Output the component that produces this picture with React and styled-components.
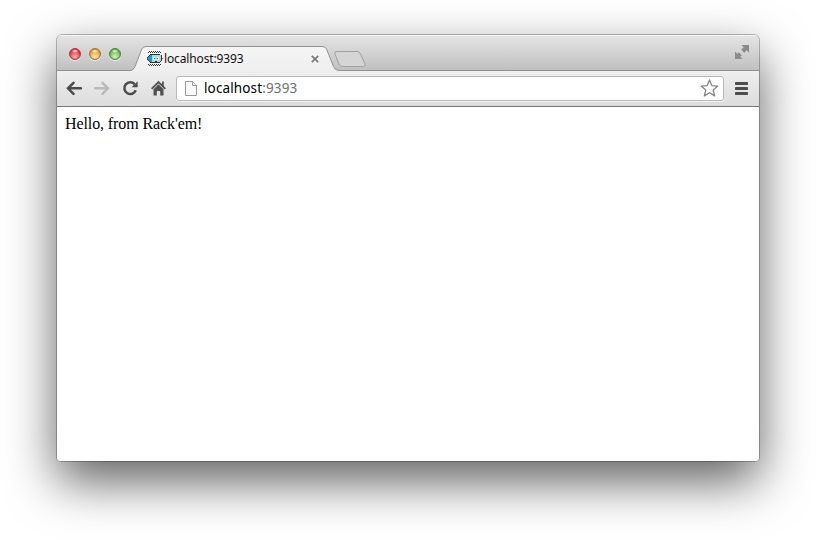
import React from "react";
import styled, { createGlobalStyle } from "styled-components";

const GlobalStyle = createGlobalStyle`
  html, body { margin: 0; background: #fff; }
  body { overflow: hidden; }
  svg { display: block; flex: none; }
`;

const Desktop = styled.main`
  box-sizing: border-box;
  width: 816px;
  height: 540px;
  padding: 35px 57px 0;
  background: #fff;
`;

const BrowserWindow = styled.section`
  display: flex;
  flex-direction: column;
  width: 702px;
  height: 426px;
  border-radius: 5px 5px 4px 4px;
  background: #fff;
  overflow: hidden;
  box-shadow: 0 0 0 1px rgba(0, 0, 0, 0.25), 0 20px 50px rgba(0, 0, 0, 0.63);
`;

const TabStrip = styled.header`
  box-sizing: border-box;
  display: flex;
  height: 36px;
  flex: none;
  background: linear-gradient(#e5e5e5, #bfbfbf);
  box-shadow: inset 0 1px #f3f3f3, inset 0 -1px #929292;
`;

const TrafficLights = styled.div`
  display: flex;
  gap: 8px;
  padding: 13px 0 0 12px;
  width: 62px;
`;

const Light = styled.i`
  box-sizing: border-box;
  width: 12px;
  height: 12px;
  border: 1px solid ${(p) => p.$edge};
  border-radius: 50%;
  background: radial-gradient(ellipse 4px 2px at 50% 20%, rgba(255, 255, 255, 0.9), transparent),
    radial-gradient(circle at 50% 75%, ${(p) => p.$glow}, ${(p) => p.$base} 65%);
  box-shadow: 0 1px 1px rgba(255, 255, 255, 0.7), inset 0 1px 1px rgba(0, 0, 0, 0.2);
`;

const Tab = styled.div`
  display: grid;
  width: 208px;
  height: 36px;
  > * { grid-area: 1 / 1; }
`;

const TabContent = styled.div`
  display: flex;
  align-items: flex-start;
  padding: 16px 0 0 16px;
  z-index: 1;
`;

const TabTitle = styled.span`
  width: 147px;
  margin-left: 1px;
  font: 12px/16px "Noto Sans", "Open Sans", sans-serif;
  letter-spacing: -0.14px;
  color: #111;
  white-space: nowrap;
`;

const CloseIcon = styled.svg`
  margin-top: 4px;
`;

const NewTab = styled.svg`
  margin: 15px 0 0 -6px;
`;

const ExpandIcon = styled.svg`
  margin: 10px 10px 0 auto;
`;

const Toolbar = styled.nav`
  box-sizing: border-box;
  display: flex;
  align-items: center;
  height: 36px;
  flex: none;
  padding: 0 10px 1px 9px;
  border-bottom: 1px solid #777;
  background: linear-gradient(#efefef, #dcdcdc);
`;

const NavButtons = styled.div`
  display: flex;
  gap: 12px;
  width: 110px;
`;

const AddressBar = styled.div`
  box-sizing: border-box;
  display: flex;
  align-items: center;
  width: 548px;
  height: 25px;
  padding: 0 4px 0 7px;
  border: 1px solid #b9b9b9;
  border-radius: 3px;
  background: #fff;
  box-shadow: 0 1px rgba(255, 255, 255, 0.6);
`;

const Address = styled.span`
  flex: 1;
  margin-left: 7px;
  font: 13.5px/20px "Noto Sans", "Open Sans", sans-serif;
  letter-spacing: 0.13px;
  color: #000;
`;

const Port = styled.span`
  color: #707070;
`;

const MenuIcon = styled.svg`
  margin-left: 11px;
`;

const Page = styled.article`
  flex: 1;
  padding: 8px;
  background: #fff;
  font: 16px/18px "Liberation Serif", serif;
  letter-spacing: -0.1px;
  color: #000;
`;

const robotRows = [
  "..k.k.k.k.k.k...",
  ".k.k.k.k.k.k.k..",
  "................",
  "...kkkkkkkkkk...",
  "..kbbccccccccck.",
  ".kbbbccccccccck.",
  "kbbbbcwwccwwcck.",
  "rbbbbcwrccrwcckr",
  "kbbbbcwwccwwcck.",
  ".kbbbccccccccck.",
  "..kbbccckkccck..",
  "...kkkkkkkkkk...",
  "................",
  ".k.k.k.k.k.k.k..",
  "..k.k.k.k.k.k...",
];
const robotColors = { k: "#333", b: "#159dcc", c: "#a4dbea", w: "#eef8fa", r: "#e0302a" };

const Favicon = () => (
  <svg width="16" height="15" viewBox="0 0 16 15" shapeRendering="crispEdges">
    {robotRows.flatMap((row, y) =>
      [...row].map((c, x) =>
        c === "." ? null : <rect key={`${x}-${y}`} x={x} y={y} width="1" height="1" fill={robotColors[c]} />
      )
    )}
  </svg>
);

const Arrow = ({ color, flip }) => (
  <svg width="16" height="16" viewBox="0 0 16 16">
    <path
      transform={flip ? "translate(16 0) scale(-1 1)" : undefined}
      d="M7.500 2.800 2 8.300l5.500 5.500M2.300 8.300H15"
      fill="none" stroke={color} strokeWidth="2.500" strokeLinecap="round"
    />
  </svg>
);

export default function App() {
  return (
    <Desktop>
      <GlobalStyle />
      <BrowserWindow>
        <TabStrip>
          <TrafficLights>
            <Light $edge="#a53b3f" $base="#df3842" $glow="#ffb0aa" />
            <Light $edge="#a0713c" $base="#e8a03c" $glow="#ffe9a0" />
            <Light $edge="#4f7f42" $base="#6cb956" $glow="#cff6b4" />
          </TrafficLights>
          <Tab>
            <svg width="208" height="36" viewBox="0 0 208 36">
              <defs>
                <linearGradient id="tabFill" x1="0" y1="0" x2="0" y2="1">
                  <stop stopColor="#f5f5f5" />
                  <stop offset="1" stopColor="#efefef" />
                </linearGradient>
              </defs>
              <path d="M0 36V35.500Q2.500 35 4 31.500L10.800 14Q12 11.500 15 11.500H191Q194.500 11.500 195.500 14L202.500 31.500Q204 35.500 208 35.500V36Z" fill="url(#tabFill)" />
              <path d="M0 35.500Q2.500 35 4 31.500L10.800 14Q12 11.500 15 11.500H191Q194.500 11.500 195.500 14L202.500 31.500Q204 35.500 208 35.500" fill="none" stroke="#929292" />
            </svg>
            <TabContent>
              <Favicon />
              <TabTitle>localhost:9393</TabTitle>
              <CloseIcon width="8" height="8" viewBox="0 0 8 8">
                <path d="m.8.8 6.400 6.400M7.200.8.8 7.200" stroke="#777" strokeWidth="1.700" />
              </CloseIcon>
            </TabContent>
          </Tab>
          <NewTab width="34" height="18" viewBox="0 0 34 18">
            <path d="M4 1.500H24Q26.500 1.500 27.500 4L32 14Q33 16.500 30.500 16.500H10Q7 16.500 6 14L2 4Q1 1.500 4 1.500Z" fill="#d5d5d5" stroke="#a0a0a0" />
          </NewTab>
          <ExpandIcon width="14" height="14" viewBox="0 0 14 14" fill="#8b8b8b">
            <path d="M6.500 0H14v7.500l-2.200-2.200-2.600 2.500-3-3 2.500-2.600ZM0 6.500V14h7.500l-2.200-2.200 1.500-1.500-3-3-1.600 1.400Z" />
          </ExpandIcon>
        </TabStrip>
        <Toolbar>
          <NavButtons>
            <Arrow color="#4c4c4c" />
            <Arrow color="#bababa" flip />
            <svg width="16" height="16" viewBox="0 0 16 16">
              <path d="M12.700 4.200A5.900 5.900 0 1 0 13.800 10.300" fill="none" stroke="#4c4c4c" strokeWidth="2.500" />
              <path d="M15.700 1.200V7.300H9.600Z" fill="#4c4c4c" />
            </svg>
            <svg width="16" height="16" viewBox="0 0 16 16" fill="none">
              <path d="M1.700 8.800 8.500 2l6.800 6.800" stroke="#505050" strokeWidth="1.900" />
              <path d="M12 1.500h1.800v5L12 4.700ZM3.500 9.200l5-5 5 5V15.500H10.200V11H6.800v4.500H3.500Z" fill="#505050" />
            </svg>
          </NavButtons>
          <AddressBar>
            <svg width="13" height="15" viewBox="0 0 13 15">
              <path d="M1.500.5h7l4 4v10h-11Z" fill="#fafafa" stroke="#999" />
              <path d="M8.500.5v4h4" fill="#eee" stroke="#999" />
            </svg>
            <Address>localhost<Port>:9393</Port></Address>
            <svg width="19" height="18" viewBox="0 0 19 18">
              <path d="m9.500 1 2.300 5.600 6 .5-4.600 3.900 1.500 5.900-5.200-3.200-5.200 3.200 1.500-5.900L1.200 7.100l6-.5Z" fill="#fff" stroke="#858585" strokeWidth="1.300" strokeLinejoin="round" />
            </svg>
          </AddressBar>
          <MenuIcon width="13" height="13" viewBox="0 0 13 13" fill="#4d4d4d">
            <rect width="13" height="3" rx=".7" />
            <rect y="5" width="13" height="3" rx=".7" />
            <rect y="10" width="13" height="3" rx=".7" />
          </MenuIcon>
        </Toolbar>
        <Page>Hello, from Rack'em!</Page>
      </BrowserWindow>
    </Desktop>
  );
}
